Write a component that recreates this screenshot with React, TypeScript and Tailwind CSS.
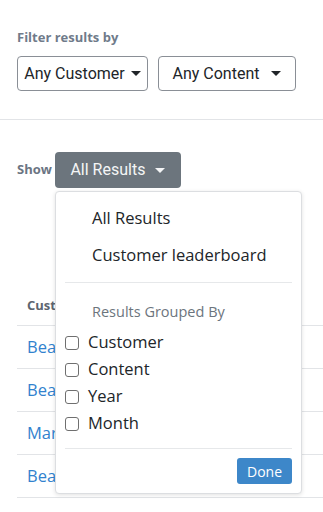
import React from "react";

const Caret = () => (
  <span className="inline-block w-0 h-0 border-l-[5px] border-r-[5px] border-t-[5px] border-l-transparent border-r-transparent border-t-current" />
);

const Check = ({ label }: { label: string }) => (
  <div className="h-[27px] flex items-center">
    <span className="w-[14px] h-[14px] border border-[#6f6f6f] rounded-[3px] bg-white" />
    <span className="ml-[9px] text-[16.5px] text-[#212529]">{label}</span>
  </div>
);

export default function App() {
  const rows = ["Bea", "Bea", "Marc", "Bea"];
  return (
    <div
      className="relative w-[323px] h-[512px] bg-white overflow-hidden"
      style={{ fontFamily: "'Open Sans', 'Noto Sans', sans-serif" }}
    >
      <div className="pl-[17px] pt-[28px]">
        <div className="text-[13px] font-bold text-[#707b8a] leading-[18px]">Filter results by</div>
        <div className="flex gap-[10px] mt-[10px]" style={{ fontFamily: "Roboto, sans-serif" }}>
          <button className="h-[35px] w-[131px] border border-[#8a8f96] rounded-[4px] flex items-center justify-center gap-[6px] text-[16px] text-[#212529]">
            Any Customer <Caret />
          </button>
          <button className="h-[35px] w-[138px] border border-[#8a8f96] rounded-[4px] flex items-center justify-center gap-[12px] text-[16px] text-[#212529]">
            Any Content <Caret />
          </button>
        </div>
      </div>
      <div className="mt-[28px] border-t border-[#e2e4e7]" />
      <div className="pl-[17px] pt-[32px] flex items-center gap-[3px]">
        <span className="text-[13px] font-bold text-[#6b7583]">Show</span>
        <button
          className="h-[36px] w-[126px] bg-[#6c757d] rounded-[4px] flex items-center justify-center gap-[10px] text-[16px] text-[#f4f5f6]"
          style={{ fontFamily: "Roboto, sans-serif" }}
        >
          All Results <Caret />
        </button>
      </div>
      <div className="ml-[17px] mt-[98px]">
        <div className="h-[40px] border-b border-[#e2e4e7] flex items-center pl-[10px] text-[13px] font-bold text-[#5d6570]">
          Customer
        </div>
        {rows.map((r, i) => (
          <div key={i} className="h-[43px] border-b border-[#e2e4e7] flex items-center pl-[10px] text-[16.5px] text-[#3182ce]">
            {r}
          </div>
        ))}
      </div>

      <div className="absolute left-[55px] top-[191px] w-[247px] bg-white border border-[#dcdee1] rounded-[4px] shadow-[0_1px_4px_rgba(0,0,0,0.12)] px-[9px] pt-[8px] pb-[9px]">
        <div className="h-[37px] flex items-center pl-[27px] text-[16.5px] text-[#212529]">All Results</div>
        <div className="h-[37px] flex items-center pl-[27px] text-[16.5px] text-[#212529]">Customer leaderboard</div>
        <div className="mt-[8px] border-t border-[#e6e8ea]" />
        <div className="mt-[18px] h-[22px] leading-[22px] pl-[27px] text-[14.5px] text-[#6c757d]">Results Grouped By</div>
        <div className="mt-[6px]">
          <Check label="Customer" />
          <Check label="Content" />
          <Check label="Year" />
          <Check label="Month" />
        </div>
        <div className="mt-[11px] border-t border-[#e6e8ea]" />
        <div className="mt-[9px] flex justify-end">
          <button className="h-[26px] w-[55px] bg-[#3d87c9] rounded-[3px] text-white text-[14px]">Done</button>
        </div>
      </div>
    </div>
  );
}
